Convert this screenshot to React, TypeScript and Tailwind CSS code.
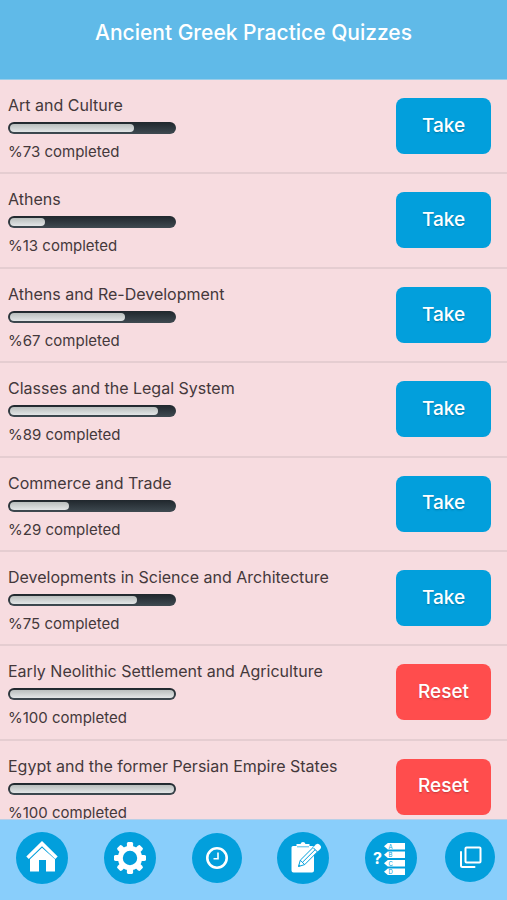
import type { ReactNode } from 'react';

type Quiz = { title: string; percent: number };

const quizzes: Quiz[] = [
  { title: 'Art and Culture', percent: 73 },
  { title: 'Athens', percent: 13 },
  { title: 'Athens and Re-Development', percent: 67 },
  { title: 'Classes and the Legal System', percent: 89 },
  { title: 'Commerce and Trade', percent: 29 },
  { title: 'Developments in Science and Architecture', percent: 75 },
  { title: 'Early Neolithic Settlement and Agriculture', percent: 100 },
  { title: 'Egypt and the former Persian Empire States', percent: 100 },
];

function ProgressBar({ percent, label }: { percent: number; label: string }) {
  return (
    <div
      role="progressbar"
      aria-label={label}
      aria-valuenow={percent}
      aria-valuemin={0}
      aria-valuemax={100}
      className="my-1 h-3 w-[168px] rounded-full bg-linear-to-b from-[#20272d] to-[#3f4a51] p-[2px]"
    >
      {/* the fill never gets shorter than its own rounded cap */}
      <div
        className="h-full rounded-full bg-linear-to-b from-[#b9bebd] to-[#e3e6e7]"
        style={{ width: `calc(16px + (100% - 16px) * ${percent / 100})` }}
      />
    </div>
  );
}

function QuizRow({ quiz }: { quiz: Quiz }) {
  const done = quiz.percent === 100;

  return (
    <li className="flex items-start justify-between border-b-2 border-[#e5cdd1] pt-3 pr-4 pl-2">
      <div>
        <h2 className="text-[16px] leading-[26px]">{quiz.title}</h2>
        <ProgressBar percent={quiz.percent} label={quiz.title} />
        <p className="text-[15px] leading-7">%{quiz.percent} completed</p>
      </div>
      <button
        type="button"
        className={`mt-1.5 h-14 w-[95px] shrink-0 rounded-lg text-[19px] font-medium text-white text-shadow-sm ${
          done ? 'bg-[#ff4d4d]' : 'bg-[#029fdc]'
        }`}
      >
        {done ? 'Reset' : 'Take'}
      </button>
    </li>
  );
}

function HomeIcon() {
  return (
    <svg viewBox="0 0 52 52" className="size-full" fill="#fff" aria-hidden="true">
      <path d="M26 9 10.3 24.4l2.5 2.7L26 14.2l13.2 12.9 2.5-2.7z" />
      <path d="M26 15.8 14 27.3V39.5h9V28h7v11.5h9V27.3z" />
    </svg>
  );
}

function GearIcon() {
  const teeth = [0, 45, 90, 135, 180, 225, 270, 315];
  return (
    <svg viewBox="0 0 52 52" className="size-full" aria-hidden="true">
      <circle cx="26" cy="26" r="9.7" fill="none" stroke="#fff" strokeWidth="5" />
      {teeth.map((angle) => (
        <path key={angle} d="M22.9 16v-4.500l.8-1.500h4.600l.8 1.500V16z" fill="#fff" transform={`rotate(${angle} 26 26)`} />
      ))}
    </svg>
  );
}

function ClockIcon() {
  return (
    <svg viewBox="0 0 50 50" className="size-full" fill="none" stroke="#fff" aria-hidden="true">
      <circle cx="25" cy="25" r="9.7" strokeWidth="2.6" />
      <path d="M26 19.5v6.200h-4.500" strokeWidth="1.6" />
    </svg>
  );
}

function NotesIcon() {
  return (
    <svg viewBox="0 0 52 52" className="size-full" aria-hidden="true">
      <path d="M16 14h3.500v-2h4a2.600 2.600 0 0 1 5 0h4v2H35a2 2 0 0 1 2 2v22.500a2 2 0 0 1-2 2H16.500a2 2 0 0 1-2-2V15.500a1.500 1.500 0 0 1 1.500-1.500z" fill="#fff" />
      <path d="M20 14.800h12" stroke="#029fdc" strokeWidth=".7" />
      <g fill="#fff" stroke="#029fdc" strokeWidth="1" strokeLinejoin="round">
        <path d="m21.500 34.500 1.800-6.300L36 15.500l4.400 4.400-12.700 12.700z" />
        <path d="m23.300 28.200 4.400 4.400M25.600 30.200l12.400-12.400" />
        <path d="m36.300 15.200 2.600-2.600c1.200-1 2.400-1 3.400 0l1 1c1 1.100 1 2.300 0 3.400l-2.600 2.600z" stroke="none" />
      </g>
      <path d="m21.300 34.700.6-2.200 1.600 1.600z" fill="#029fdc" />
    </svg>
  );
}

function AnswersIcon() {
  const answers = ['A', 'B', 'C', 'D'];
  return (
    <svg viewBox="0 0 52 52" className="size-full" aria-hidden="true">
      <text x="8" y="32" fill="#fff" fontFamily="Inter, sans-serif" fontSize="16" fontWeight="700">?</text>
      {answers.map((letter, i) => (
        <g key={letter} transform={`translate(0 ${i * 8.5})`}>
          <path d="M19 14.200 22.800 11H40v6.500H22.800z" fill="#fff" />
          <text x="23.5" y="16.6" fill="#029fdc" fontFamily="Inter, sans-serif" fontSize="6">{letter}</text>
        </g>
      ))}
    </svg>
  );
}

function CopyIcon() {
  return (
    <svg viewBox="0 0 50 50" className="size-full" fill="none" stroke="#fff" strokeWidth="2" strokeLinejoin="round" strokeLinecap="round" aria-hidden="true">
      <rect x="20.5" y="15.5" width="15" height="15" rx="1" />
      <path d="M16 20v13.500a1.500 1.500 0 0 0 1.500 1.500h12" />
    </svg>
  );
}

function NavButton({ label, small, children }: { label: string; small?: boolean; children: ReactNode }) {
  return (
    <button
      type="button"
      aria-label={label}
      className={`shrink-0 rounded-full bg-[#029fdc] ${small ? 'size-[50px]' : 'size-[52px]'}`}
    >
      {children}
    </button>
  );
}

export default function App() {
  return (
    <div className="flex h-screen flex-col bg-[#f7dce0] font-['Inter',sans-serif] text-[#44383b]">
      <header className="flex h-20 shrink-0 justify-center border-b border-[#9bcde8] bg-[#60bae8] pt-4">
        <h1 className="text-[21px] leading-[34px] font-medium text-white">Ancient Greek Practice Quizzes</h1>
      </header>

      <main className="min-h-0 flex-1 overflow-hidden">
        <ul className="grid h-[755px] auto-rows-fr">
          {quizzes.map((quiz) => (
            <QuizRow key={quiz.title} quiz={quiz} />
          ))}
        </ul>
      </main>

      <nav className="flex h-[81px] shrink-0 items-start border-t border-[#b9cfe6] bg-[#89cefb] pt-3 pr-3 pl-4">
        <div className="flex flex-1 items-center justify-between">
          <NavButton label="Home"><HomeIcon /></NavButton>
          <NavButton label="Settings"><GearIcon /></NavButton>
          <NavButton label="History" small><ClockIcon /></NavButton>
          <NavButton label="Notes"><NotesIcon /></NavButton>
          <NavButton label="Quizzes"><AnswersIcon /></NavButton>
        </div>
        <div className="ml-7">
          <NavButton label="Copy" small><CopyIcon /></NavButton>
        </div>
      </nav>
    </div>
  );
}
